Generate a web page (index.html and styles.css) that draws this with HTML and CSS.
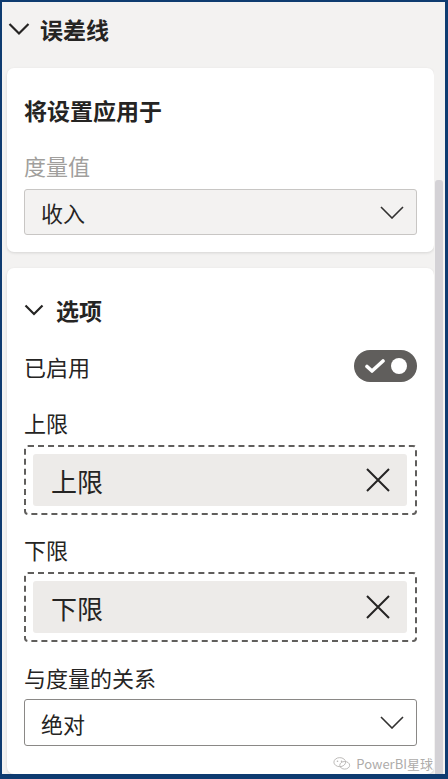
FILE: index.html
```html
<!DOCTYPE html>
<html lang="zh">
<head>
<meta charset="utf-8">
<link rel="stylesheet" href="styles.css">
</head>
<body>
<div class="frame">
  <div class="content">
    <div class="section-head">
      <svg class="chev-lg" viewBox="0 0 22 14" width="22" height="14"><path d="M1.5 2 L11 11.5 L20.5 2" fill="none" stroke="#252423" stroke-width="2.2"/></svg>
      <span class="section-title">误差线</span>
    </div>

    <div class="card card-1">
      <div class="card-title">将设置应用于</div>
      <div class="label muted">度量值</div>
      <div class="dropdown dropdown-gray">
        <span>收入</span>
        <svg viewBox="0 0 24 13" width="24" height="13"><path d="M1 1 L12 12 L23 1" fill="none" stroke="#323130" stroke-width="1.6"/></svg>
      </div>
    </div>

    <div class="card card-2">
      <div class="sub-head">
        <svg viewBox="0 0 20 12" width="20" height="12"><path d="M1.5 1.5 L10 10 L18.5 1.5" fill="none" stroke="#252423" stroke-width="2.2"/></svg>
        <span class="card-title">选项</span>
      </div>
      <div class="row">
        <span class="label">已启用</span>
        <div class="toggle">
          <svg viewBox="0 0 20 16" width="20" height="16"><path d="M2 8.5 L7 13 L18 3" fill="none" stroke="#ffffff" stroke-width="3.6" stroke-linecap="round" stroke-linejoin="round"/></svg>
          <span class="knob"></span>
        </div>
      </div>

      <div class="label lbl-field">上限</div>
      <div class="well">
        <div class="pill">
          <span>上限</span>
          <svg viewBox="0 0 24 24" width="24" height="24"><path d="M1 1 L23 23 M23 1 L1 23" fill="none" stroke="#252423" stroke-width="2"/></svg>
        </div>
      </div>

      <div class="label lbl-field lbl-next">下限</div>
      <div class="well">
        <div class="pill">
          <span>下限</span>
          <svg viewBox="0 0 24 24" width="24" height="24"><path d="M1 1 L23 23 M23 1 L1 23" fill="none" stroke="#252423" stroke-width="2"/></svg>
        </div>
      </div>

      <div class="label lbl-field lbl-rel">与度量的关系</div>
      <div class="dropdown dropdown-white">
        <span>绝对</span>
        <svg viewBox="0 0 24 13" width="24" height="13"><path d="M1 1 L12 12 L23 1" fill="none" stroke="#323130" stroke-width="1.6"/></svg>
      </div>

      <div class="watermark">
        <svg viewBox="0 0 20 16" width="18" height="15"><g fill="none" stroke="#b5b3b1" stroke-width="1"><ellipse cx="7.5" cy="6.5" rx="6.5" ry="5"/><ellipse cx="13" cy="10" rx="5.5" ry="4.2"/></g><g fill="#b5b3b1"><circle cx="5" cy="5.5" r="0.9"/><circle cx="9.5" cy="5.5" r="0.9"/></g></svg>
        <span>PowerBI星球</span>
      </div>
    </div>
  </div>
  <div class="scroll-track"><div class="scroll-thumb"></div></div>
</div>
</body>
</html>
```

FILE: styles.css
```css
* { box-sizing: border-box; }
html, body {
  margin: 0;
  padding: 0;
  background: #0e3b70;
}
body {
  font-family: "Noto Sans CJK SC", "Noto Sans", sans-serif;
  color: #252423;
}
.frame {
  width: 448px;
  height: 779px;
  border-style: solid;
  border-color: #0e3b70;
  border-width: 2px 3px 5px 2px;
  background: #f3f2f1;
  display: flex;
  overflow: hidden;
}
.content {
  flex: 1;
  padding: 0 0 0 5px;
  overflow: hidden;
  display: flex;
  flex-direction: column;
}
.section-head {
  height: 58px;
  display: flex;
  align-items: center;
  padding-left: 1px;
  gap: 10px;
  padding-bottom: 4px;
}
.chev-lg { flex: none; }
.section-title {
  font-size: 23px;
  font-weight: 700;
  line-height: 32px;
}
.card {
  background: #ffffff;
  border-radius: 7px;
  box-shadow: 0 1px 3px rgba(0, 0, 0, 0.12);
  padding: 0 17px;
  margin-top: 8px;
}
.card-1 {
  padding-top: 26px;
  padding-bottom: 17px;
}
.card-2 {
  margin-top: 16px;
  padding-top: 26px;
  flex: 1;
}
.card-title {
  font-size: 23px;
  font-weight: 700;
  line-height: 32px;
}
.label {
  font-size: 22px;
  line-height: 32px;
}
.muted {
  color: #a19f9d;
  margin-top: 23px;
}
.dropdown {
  height: 46px;
  border-radius: 3px;
  display: flex;
  align-items: center;
  justify-content: space-between;
  padding: 0 12px 0 16px;
  font-size: 22px;
  margin-top: 8px;
}
.dropdown-gray {
  background: #f3f2f1;
  border: 1px solid #c8c6c4;
}
.dropdown-white {
  background: #ffffff;
  border: 1.5px solid #8a8886;
  margin-top: 6px;
  height: 47px;
}
.sub-head {
  display: flex;
  align-items: center;
  gap: 12px;
}
.row {
  margin-top: 24px;
  display: flex;
  align-items: center;
  justify-content: space-between;
}
.toggle {
  width: 63px;
  height: 32px;
  border-radius: 16px;
  background: #605e5c;
  display: flex;
  align-items: center;
  justify-content: space-between;
  padding: 0 10px 0 11px;
}
.knob {
  width: 16px;
  height: 16px;
  border-radius: 50%;
  background: #ffffff;
}
.lbl-field { margin-top: 24px; }
.lbl-next { margin-top: 18px; }
.lbl-rel { margin-top: 19px; }
.well {
  margin-top: 7px;
  height: 70px;
  border: 2px dashed #605e5c;
  border-radius: 4px;
  padding: 7px 8px 7px 7px;
}
.pill {
  height: 52px;
  background: #edebe9;
  border-radius: 3px;
  display: flex;
  align-items: center;
  justify-content: space-between;
  padding: 0 17px 0 18px;
  font-size: 26px;
}
.pill svg { flex: none; }
.watermark {
  margin-top: 6px;
  display: flex;
  justify-content: flex-end;
  align-items: center;
  gap: 5px;
  font-size: 13px;
  color: #aeacaa;
  height: 22px;
  margin-right: -16px;
}
.scroll-track {
  width: 11px;
  flex: none;
  display: flex;
  flex-direction: column;
  padding: 178px 2px 0 1px;
}
.scroll-thumb {
  flex: 1;
  background: #d4d2d6;
  border-radius: 3px 3px 0 0;
}
```
